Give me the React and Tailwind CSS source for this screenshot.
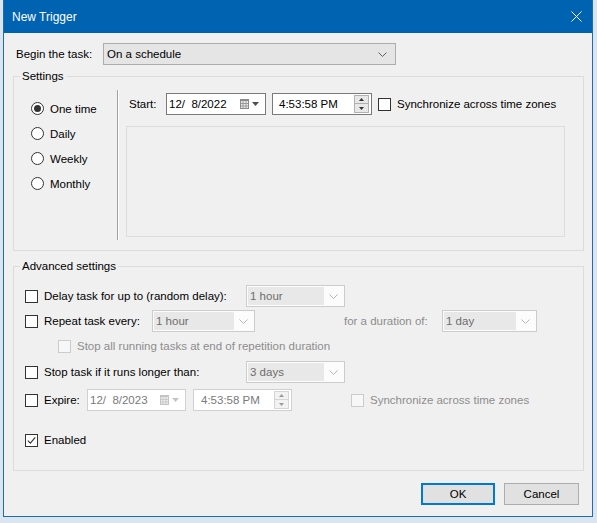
import React from "react";

// small Win10 style widgets
function CheckBox({ checked = false, disabled = false }) {
    return (
        <span
            className={`w-[13px] h-[13px] shrink-0 border flex items-center justify-center ${disabled ? 'border-[#cccccc] bg-[#f7f7f7]' : 'border-[#333333] bg-white'}`}
        >
            {checked && (
                <svg width="9" height="9" viewBox="0 0 9 9">
                    <path d="M0.8 4.6 L3.4 7.2 L8.2 1.4" stroke="#333333" strokeWidth="1.1" fill="none" />
                </svg>
            )}
        </span>
    );
}

function Radio({ checked = false, label }) {
    return (
        <div className="h-[25px] flex items-center">
            <span className="w-[13px] h-[13px] rounded-full border border-[#333333] bg-white flex items-center justify-center">
                {checked && <span className="w-[7px] h-[7px] rounded-full bg-[#333333]" />}
            </span>
            <span className="ml-[6px]">{label}</span>
        </div>
    );
}

function Chevron({ color = "#606060" }) {
    return (
        <svg width="9" height="5" viewBox="0 0 9 5">
            <path d="M0.5 0.5 L4.5 4.5 L8.5 0.5" stroke={color} strokeWidth="1" fill="none" />
        </svg>
    );
}

function DisabledCombo({ value, width }) {
    return (
        <div className={`${width} h-[22px] border border-[#cccccc] bg-[#fcfcfc] p-[1px] flex`}>
            <div className="flex-1 bg-[#e8e8e8] flex items-center pl-[2px] text-[#6d6d6d]">{value}</div>
            <div className="w-[19px] flex items-center justify-center">
                <Chevron color="#b5b5b5" />
            </div>
        </div>
    );
}

function CalendarIcon({ disabled = false }) {
    const c = disabled ? '#c4c4c4' : '#8a8a8a';
    const a = disabled ? '#c4c4c4' : '#4d4d4d';
    return (
        <div className="flex items-center gap-[3px]">
            <svg width="9" height="10" viewBox="0 0 9 10">
                <rect x="0.5" y="0.5" width="8" height="9" fill="#ececec" stroke={c} />
                <rect x="0" y="0" width="9" height="2" fill={c} />
                <path d="M3 2 V10 M6 2 V10 M0 4.5 H9 M0 7 H9" stroke={c} strokeWidth="0.8" />
            </svg>
            <svg width="7" height="4" viewBox="0 0 7 4">
                <polygon points="0,0 7,0 3.5,4" fill={a} />
            </svg>
        </div>
    );
}

function Spin({ disabled = false }) {
    const t = disabled ? '#9a9a9a' : '#333333';
    const b = disabled ? 'border-[#d5d5d5] bg-[#f2f2f2]' : 'border-[#b0b0b0] bg-[#e8e8e8]';
    return (
        <div className="flex flex-col gap-0 mr-[2px]">
            <div className={`w-[15px] h-[9px] border ${b} flex items-center justify-center`}>
                <svg width="5" height="3" viewBox="0 0 5 3"><polygon points="0,3 5,3 2.5,0" fill={t} /></svg>
            </div>
            <div className={`w-[15px] h-[9px] border border-t-0 ${b} flex items-center justify-center`}>
                <svg width="5" height="3" viewBox="0 0 5 3"><polygon points="0,0 5,0 2.5,3" fill={t} /></svg>
            </div>
        </div>
    );
}

function DateBox({ value, disabled = false, width }) {
    return (
        <div className={`${width} h-[22px] border bg-white flex items-center pl-[2px] pr-[6px] ${disabled ? 'border-[#d0d0d0] text-[#7a7a7a]' : 'border-[#7a7a7a]'}`}>
            <span className="whitespace-pre">{value}</span>
            <span className="ml-auto">
                <CalendarIcon disabled={disabled} />
            </span>
        </div>
    );
}

function TimeBox({ value, disabled = false, width }) {
    return (
        <div className={`${width} h-[22px] border bg-white flex items-center ${disabled ? 'border-[#d0d0d0] text-[#7a7a7a] pl-[7px]' : 'border-[#7a7a7a] pl-[6px]'}`}>
            <span>{value}</span>
            <span className="ml-auto">
                <Spin disabled={disabled} />
            </span>
        </div>
    );
}

export default function App() {
    return (
        <div className="w-[597px] h-[523px] bg-[#dbe5f1] pl-[3px] font-['Liberation_Sans',Arial,sans-serif] text-[11.5px] text-black leading-[16px]">
            <div className="w-[590px] h-[517px] border-x border-b border-[#1a6cb3] bg-[#f0f0f0] flex flex-col">
                {/* Title bar */}
                <div className="h-[33px] bg-[#0063b1] flex items-center pl-[8px] pr-[10px] text-white text-[12px]">
                    <span>New Trigger</span>
                    <svg className="ml-auto" width="11" height="11" viewBox="0 0 11 11">
                        <path d="M0.5 0.5 L10.5 10.5 M10.5 0.5 L0.5 10.5" stroke="#ffffff" strokeWidth="1" />
                    </svg>
                </div>

                {/* Begin the task */}
                <div className="pt-[10px] pl-[12px] flex items-center">
                    <span className="w-[87px]">Begin the task:</span>
                    <div className="w-[293px] h-[22px] border border-[#adadad] bg-[#e5e5e5] flex items-center pl-[3px] pr-[8px]">
                        <span>On a schedule</span>
                        <span className="ml-auto"><Chevron /></span>
                    </div>
                </div>

                {/* Settings */}
                <fieldset className="mt-[3px] ml-[9px] w-[571px] border border-[#dcdcdc]">
                    <legend className="ml-[6px] px-[2px] leading-[16px]">Settings</legend>
                    <div className="h-[166px] flex">
                        <div className="w-[103px] pl-[17px] pt-[12px]">
                            <Radio checked label="One time" />
                            <Radio label="Daily" />
                            <Radio label="Weekly" />
                            <Radio label="Monthly" />
                        </div>
                        <div className="mt-[6px] h-[150px] w-[2px] border-l border-r border-l-[#a0a0a0] border-r-white" />
                        <div className="pl-[7px] flex-1">
                            <div className="mt-[9px] h-[22px] pl-[3px] flex items-center">
                                <span className="w-[37px]">Start:</span>
                                <DateBox value="12/  8/2022" width="w-[100px]" />
                                <span className="ml-[6px]">
                                    <TimeBox value="4:53:58 PM" width="w-[100px]" />
                                </span>
                                <span className="ml-[6px]"><CheckBox /></span>
                                <span className="ml-[6px]">Synchronize across time zones</span>
                            </div>
                            <div className="mt-[11px] w-[439px] h-[111px] border border-[#dcdcdc]" />
                        </div>
                    </div>
                </fieldset>

                {/* Advanced settings */}
                <fieldset className="mt-[7px] ml-[9px] w-[571px] border border-[#dcdcdc]">
                    <legend className="ml-[6px] px-[2px] leading-[16px]">Advanced settings</legend>
                    <div className="h-[196px] pl-[11px] pt-[11px] flex flex-col">
                        <div className="h-[22px] flex items-center">
                            <CheckBox />
                            <span className="ml-[6px] w-[202px]">Delay task for up to (random delay):</span>
                            <DisabledCombo value="1 hour" width="w-[99px]" />
                        </div>
                        <div className="mt-[3px] h-[22px] flex items-center">
                            <CheckBox />
                            <span className="ml-[6px] w-[108px]">Repeat task every:</span>
                            <DisabledCombo value="1 hour" width="w-[103px]" />
                            <span className="ml-[89px] w-[98px] text-[#8d8d8d]">for a duration of:</span>
                            <DisabledCombo value="1 day" width="w-[95px]" />
                        </div>
                        <div className="mt-[3px] h-[22px] flex items-center pl-[33px]">
                            <CheckBox disabled />
                            <span className="ml-[6px] text-[#8d8d8d]">Stop all running tasks at end of repetition duration</span>
                        </div>
                        <div className="mt-[4px] h-[22px] flex items-center">
                            <CheckBox />
                            <span className="ml-[6px] w-[202px]">Stop task if it runs longer than:</span>
                            <DisabledCombo value="3 days" width="w-[99px]" />
                        </div>
                        <div className="mt-[6px] h-[22px] flex items-center">
                            <CheckBox />
                            <span className="ml-[6px] w-[43px]">Expire:</span>
                            <DateBox value="12/  8/2023" width="w-[99px]" disabled />
                            <span className="ml-[7px]">
                                <TimeBox value="4:53:58 PM" width="w-[99px]" disabled />
                            </span>
                            <span className="ml-[59px]"><CheckBox disabled /></span>
                            <span className="ml-[6px] text-[#8d8d8d]">Synchronize across time zones</span>
                        </div>
                        <div className="mt-[18px] h-[22px] flex items-center">
                            <CheckBox checked />
                            <span className="ml-[6px]">Enabled</span>
                        </div>
                    </div>
                </fieldset>

                {/* Buttons */}
                <div className="mt-[12px] pr-[13px] flex justify-end gap-[9px]">
                    <button className="w-[74px] h-[22px] border-2 border-[#0078d7] bg-[#e1e1e1] flex items-center justify-center">OK</button>
                    <button className="w-[75px] h-[22px] border border-[#adadad] bg-[#e1e1e1] flex items-center justify-center">Cancel</button>
                </div>
            </div>
        </div>
    );
}
